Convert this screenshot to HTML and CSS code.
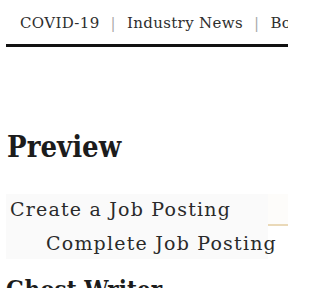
FILE: index.html
```html
<!DOCTYPE html>
<html>
<head>
<meta charset="utf-8">
<link rel="stylesheet" href="styles.css">
</head>
<body>
<nav class="topnav">
  <a class="nav-item">COVID-19</a><span class="sep">|</span><a class="nav-item">Industry News</a><span class="sep">|</span><a class="nav-item">Books</a>
</nav>
<div class="rule"></div>
<h1 class="title">Preview</h1>
<div class="preview-row">
  <div class="preview-box">
    <div class="line1">Create a Job Posting</div>
    <div class="line2">Complete Job Posting</div>
  </div>
  <div class="side-tab"></div>
</div>
<h2 class="subtitle">Ghost Writer</h2>
</body>
</html>
```
FILE: styles.css
```css
html, body { margin: 0; padding: 0; background: #fff; overflow: hidden; }
body { width: 288px; height: 288px; font-family: "DejaVu Serif", serif; color: #222; }
.topnav { display: flex; white-space: nowrap; padding: 14px 0 0 20px; height: 30px; box-sizing: border-box; font-size: 15px; letter-spacing: 0.35px; color: #2e2e2e; align-items: baseline; }
.sep { margin: 0 11px; color: #aaa; }
.rule { margin: 14px 0 0 6px; height: 3px; background: #111; }
.title { margin: 85px 0 0 7px; font-family: "DejaVu Serif Condensed", "DejaVu Serif", serif; font-size: 29px; font-weight: bold; line-height: 30px; color: #1c1c1c; }
.preview-row { display: flex; margin: 32px 0 0 6px; }
.preview-box { width: 262px; height: 65px; background: #fafafa; padding: 0 0 0 4px; box-sizing: border-box; font-size: 19px; letter-spacing: 1.2px; color: #2a2a2a; white-space: nowrap; }
.line1 { line-height: 30px; }
.line2 { margin-top: 4px; line-height: 30px; padding-left: 36px; }
.side-tab { flex: 1; height: 30px; background: #fdfcfa; border-bottom: 2px solid #ead9b8; }
.subtitle { margin: 16px 0 0 6px; font-family: "DejaVu Serif Condensed", "DejaVu Serif", serif; font-size: 24px; font-weight: bold; color: #1c1c1c; }
```
